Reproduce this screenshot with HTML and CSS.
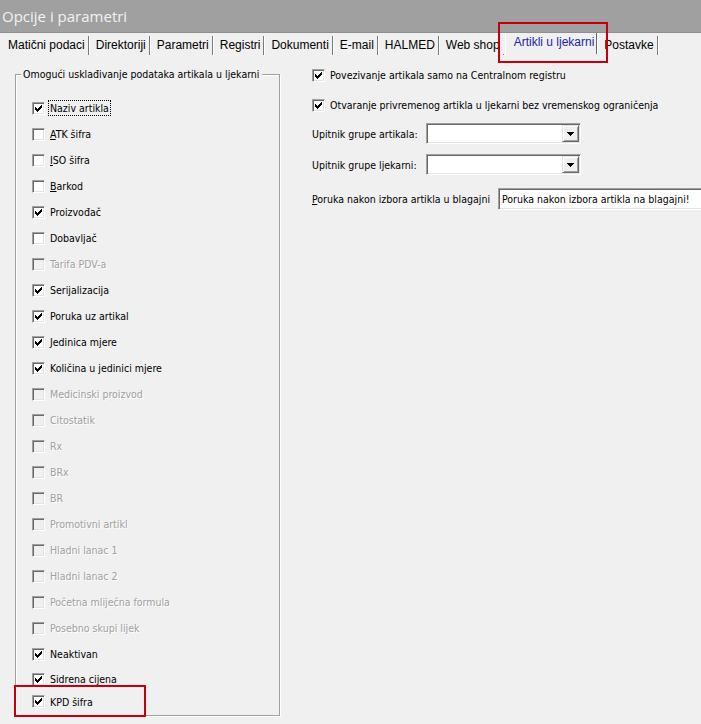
FILE: index.html
```html
<!DOCTYPE html>
<html lang="hr">
<head>
<meta charset="utf-8">
<title>Opcije i parametri</title>
<link rel="stylesheet" href="styles.css">
</head>
<body>
<div class="window">
  <div class="titlebar">Opcije i parametri</div>
  <div class="tabs">
    <div class="tab first">Matični podaci</div>
    <div class="tab">Direktoriji</div>
    <div class="tab">Parametri</div>
    <div class="tab">Registri</div>
    <div class="tab">Dokumenti</div>
    <div class="tab">E-mail</div>
    <div class="tab">HALMED</div>
    <div class="tab">Web shop</div>
    <div class="tab active">Artikli u ljekarni</div>
    <div class="tab">Postavke</div>
  </div>
  <div class="content">
    <div class="group">
      <div class="legend">Omogući usklađivanje podataka artikala u ljekarni</div>
      <div class="list">
        <div class="row"><span class="cb"><svg class="chk" viewBox="0 0 7 7"><path d="M0 2h1v1h1v1h1V3h1V2h1V1h1V0h1v3H6v1H5v1H4v1H3v1H2V6H1V5H0z"/></svg></span><span class="lbl focus">Naziv artikla</span></div>
        <div class="row"><span class="cb"></span><span class="lbl"><u>A</u>TK šifra</span></div>
        <div class="row"><span class="cb"></span><span class="lbl"><u>I</u>SO šifra</span></div>
        <div class="row"><span class="cb"></span><span class="lbl"><u>B</u>arkod</span></div>
        <div class="row"><span class="cb"><svg class="chk" viewBox="0 0 7 7"><path d="M0 2h1v1h1v1h1V3h1V2h1V1h1V0h1v3H6v1H5v1H4v1H3v1H2V6H1V5H0z"/></svg></span><span class="lbl">Proizvođač</span></div>
        <div class="row"><span class="cb"></span><span class="lbl">Dobavljač</span></div>
        <div class="row disabled"><span class="cb"></span><span class="lbl">Tarifa PDV-a</span></div>
        <div class="row"><span class="cb"><svg class="chk" viewBox="0 0 7 7"><path d="M0 2h1v1h1v1h1V3h1V2h1V1h1V0h1v3H6v1H5v1H4v1H3v1H2V6H1V5H0z"/></svg></span><span class="lbl">Serijalizacija</span></div>
        <div class="row"><span class="cb"><svg class="chk" viewBox="0 0 7 7"><path d="M0 2h1v1h1v1h1V3h1V2h1V1h1V0h1v3H6v1H5v1H4v1H3v1H2V6H1V5H0z"/></svg></span><span class="lbl">Poruka uz artikal</span></div>
        <div class="row"><span class="cb"><svg class="chk" viewBox="0 0 7 7"><path d="M0 2h1v1h1v1h1V3h1V2h1V1h1V0h1v3H6v1H5v1H4v1H3v1H2V6H1V5H0z"/></svg></span><span class="lbl">Jedinica mjere</span></div>
        <div class="row"><span class="cb"><svg class="chk" viewBox="0 0 7 7"><path d="M0 2h1v1h1v1h1V3h1V2h1V1h1V0h1v3H6v1H5v1H4v1H3v1H2V6H1V5H0z"/></svg></span><span class="lbl">Količina u jedinici mjere</span></div>
        <div class="row disabled"><span class="cb"></span><span class="lbl">Medicinski proizvod</span></div>
        <div class="row disabled"><span class="cb"></span><span class="lbl">Citostatik</span></div>
        <div class="row disabled"><span class="cb"></span><span class="lbl">Rx</span></div>
        <div class="row disabled"><span class="cb"></span><span class="lbl">BRx</span></div>
        <div class="row disabled"><span class="cb"></span><span class="lbl">BR</span></div>
        <div class="row disabled"><span class="cb"></span><span class="lbl">Promotivni artikl</span></div>
        <div class="row disabled"><span class="cb"></span><span class="lbl">Hladni lanac 1</span></div>
        <div class="row disabled"><span class="cb"></span><span class="lbl">Hladni lanac 2</span></div>
        <div class="row disabled"><span class="cb"></span><span class="lbl">Početna mliječna formula</span></div>
        <div class="row disabled"><span class="cb"></span><span class="lbl">Posebno skupi lijek</span></div>
        <div class="row"><span class="cb"><svg class="chk" viewBox="0 0 7 7"><path d="M0 2h1v1h1v1h1V3h1V2h1V1h1V0h1v3H6v1H5v1H4v1H3v1H2V6H1V5H0z"/></svg></span><span class="lbl">Neaktivan</span></div>
        <div class="row row-s"><span class="cb"><svg class="chk" viewBox="0 0 7 7"><path d="M0 2h1v1h1v1h1V3h1V2h1V1h1V0h1v3H6v1H5v1H4v1H3v1H2V6H1V5H0z"/></svg></span><span class="lbl">Sidrena cijena</span></div>
        <div class="row row-k"><span class="cb"><svg class="chk" viewBox="0 0 7 7"><path d="M0 2h1v1h1v1h1V3h1V2h1V1h1V0h1v3H6v1H5v1H4v1H3v1H2V6H1V5H0z"/></svg></span><span class="lbl">KPD šifra</span></div>
      </div>
    </div>
    <div class="side">
      <div class="opt opt-1"><span class="cb"><svg class="chk" viewBox="0 0 7 7"><path d="M0 2h1v1h1v1h1V3h1V2h1V1h1V0h1v3H6v1H5v1H4v1H3v1H2V6H1V5H0z"/></svg></span><span class="lbl">Povezivanje artikala samo na Centralnom registru</span></div>
      <div class="opt opt-2"><span class="cb"><svg class="chk" viewBox="0 0 7 7"><path d="M0 2h1v1h1v1h1V3h1V2h1V1h1V0h1v3H6v1H5v1H4v1H3v1H2V6H1V5H0z"/></svg></span><span class="lbl">Otvaranje privremenog artikla u ljekarni bez vremenskog ograničenja</span></div>
      <div class="field field-1"><span class="flabel">Upitnik grupe artikala:</span><div class="combo"><span class="combo-btn"><svg class="arrow" viewBox="0 0 7 4"><path d="M0 0h7v1H6v1H5v1H4v1H3V3H2V2H1V1H0z"/></svg></span></div></div>
      <div class="field field-2"><span class="flabel">Upitnik grupe ljekarni:</span><div class="combo"><span class="combo-btn"><svg class="arrow" viewBox="0 0 7 4"><path d="M0 0h7v1H6v1H5v1H4v1H3V3H2V2H1V1H0z"/></svg></span></div></div>
      <div class="field field-3"><span class="flabel wide"><u>P</u>oruka nakon izbora artikla u blagajni</span><div class="textbox">Poruka nakon izbora artikla na blagajni!</div></div>
    </div>
  </div>
  <div class="mark mark-tab"></div>
  <div class="mark mark-kpd"></div>
</div>
</body>
</html>
```
FILE: styles.css
```css
html, body {
  margin: 0;
  padding: 0;
  background: #f0f0f0;
  overflow: hidden;
}
body {
  font-family: "DejaVu Sans Condensed", "DejaVu Sans", sans-serif;
  font-size: 10.5px;
  color: #000;
}
.window {
  position: relative;
  width: 701px;
  height: 724px;
  overflow: hidden;
}
.titlebar {
  height: 32px;
  line-height: 32px;
  background: #a0a0a0;
  border-bottom: 1px solid #8e8e8e;
  color: #f2f2f2;
  font-family: "Open Sans", sans-serif;
  font-size: 15px;
  padding-left: 2px;
}
.tabs {
  display: flex;
  height: 23px;
  box-sizing: border-box;
  padding-top: 3px;
  font-family: "Liberation Sans", sans-serif;
  font-size: 12px;
  color: #000;
}
.tab {
  height: 19px;
  line-height: 19px;
  padding: 0 3px 0 7px;
  border-right: 1px solid #7a7a7a;
  box-shadow: 1px 0 0 #fff;
  white-space: nowrap;
}
.tab.first {
  padding-left: 8px;
}
.tab.active {
  margin-left: -3px;
  margin-top: -3px;
  height: 21px;
  line-height: 19px;
  padding: 0 2px 0 13px;
  color: #1f1fa5;
  background: linear-gradient(#fff, #fff) 4px 0 / 1px 100% no-repeat, #f0f0f0;
  border-right: 1px solid #696969;
}
.content {
  display: flex;
  align-items: flex-start;
}
.group {
  flex: none;
  margin: 18px 0 0 15px;
  width: 265px;
  box-sizing: border-box;
  border: 1px solid #a0a0a0;
  box-shadow: inset 1px 1px 0 #fff, 1px 1px 0 #fff;
  padding-bottom: 3px;
}
.legend {
  display: table;
  margin: -8px 0 0 5px;
  padding: 0 2px;
  height: 14px;
  line-height: 14px;
  background: #f0f0f0;
  white-space: nowrap;
}
.list {
  margin-top: 14px;
}
.row {
  display: flex;
  align-items: center;
  gap: 5px;
  height: 26px;
  padding-left: 16px;
}
.row.row-s {
  height: 24px;
}
.row.row-k {
  height: 21px;
}
.lbl {
  line-height: 14px;
  white-space: nowrap;
}
.lbl.focus {
  margin-left: -1px;
  padding: 0 1px;
  outline: 1px dotted #000;
}
.cb {
  flex: none;
  display: flex;
  width: 13px;
  height: 13px;
  box-sizing: border-box;
  padding: 2px;
  border: 1px solid;
  border-color: #a0a0a0 #fff #fff #a0a0a0;
  box-shadow: inset 1px 1px 0 #696969, inset -1px -1px 0 #e3e3e3;
  background: #fff;
}
.chk {
  display: block;
  width: 7px;
  height: 7px;
  shape-rendering: crispEdges;
  fill: #000;
}
.row.disabled .cb {
  background: #f0f0f0;
}
.row.disabled .lbl {
  color: #a0a0a0;
  text-shadow: 1px 1px 0 #fff;
}
.side {
  flex: none;
  margin-left: 32px;
  padding-top: 10px;
  display: flex;
  flex-direction: column;
}
.opt {
  display: flex;
  align-items: center;
  gap: 5px;
  height: 18px;
}
.opt-2 {
  margin-top: 12px;
}
.field {
  display: flex;
  align-items: center;
}
.field-1 {
  margin-top: 9px;
}
.field-2 {
  margin-top: 10px;
}
.field-3 {
  margin-top: 13px;
}
.flabel {
  width: 114px;
  flex: none;
  white-space: nowrap;
}
.flabel.wide {
  width: 186px;
}
.combo {
  width: 155px;
  height: 21px;
  box-sizing: border-box;
  border: 1px solid;
  border-color: #a0a0a0 #fff #fff #a0a0a0;
  box-shadow: inset 1px 1px 0 #696969, inset -1px -1px 0 #e3e3e3;
  background: #fff;
  padding: 1px;
  display: flex;
  justify-content: flex-end;
}
.combo-btn {
  width: 17px;
  height: 17px;
  box-sizing: border-box;
  background: #f0f0f0;
  border: 1px solid;
  border-color: #e3e3e3 #696969 #696969 #e3e3e3;
  box-shadow: inset 1px 1px 0 #fff, inset -1px -1px 0 #a0a0a0;
  display: flex;
  align-items: center;
  justify-content: center;
}
.arrow {
  display: block;
  width: 7px;
  height: 4px;
  shape-rendering: crispEdges;
  fill: #000;
}
.textbox {
  flex: none;
  width: 230px;
  height: 22px;
  line-height: 18px;
  box-sizing: border-box;
  border: 1px solid;
  border-color: #a0a0a0 #fff #fff #a0a0a0;
  box-shadow: inset 1px 1px 0 #696969, inset -1px -1px 0 #e3e3e3;
  background: #fff;
  padding: 1px 3px;
  white-space: nowrap;
  overflow: hidden;
}
.mark {
  position: absolute;
  box-sizing: border-box;
  border: 2px solid #c3000c;
  pointer-events: none;
}
.mark-tab {
  left: 498px;
  top: 22px;
  width: 110px;
  height: 41px;
}
.mark-kpd {
  left: 14px;
  top: 685px;
  width: 132px;
  height: 32px;
}
```
